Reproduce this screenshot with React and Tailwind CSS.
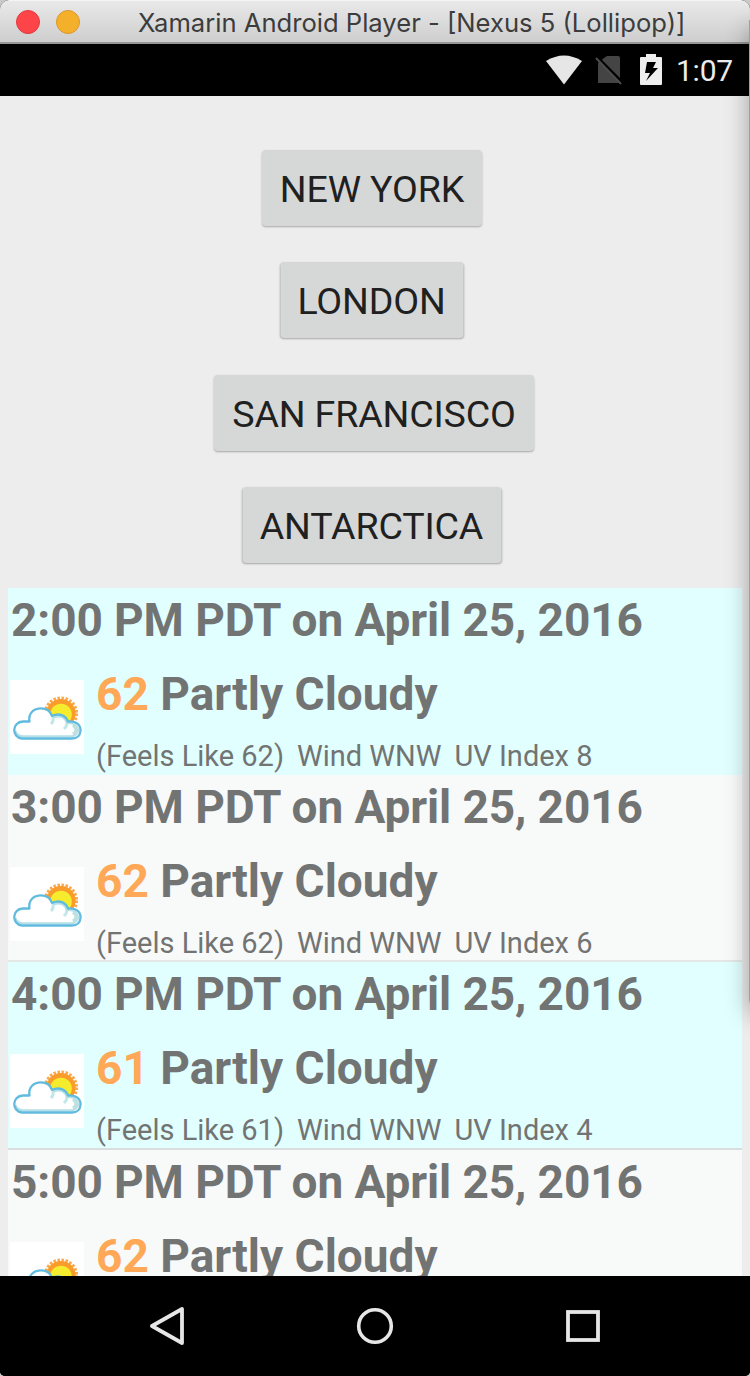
const cities = [
  { name: "NEW YORK", box: "w-[220px] -translate-x-[3px]" },
  { name: "LONDON", box: "w-[183px] -translate-x-[3.5px]" },
  { name: "SAN FRANCISCO", box: "w-[320px] -translate-x-[1px]" },
  { name: "ANTARCTICA", box: "w-[259px] -translate-x-[3.5px]" },
];

const hours = [
  { time: "2:00 PM", temp: 62, uv: 8, row: "h-[187px] bg-[#e1ffff] border-transparent" },
  { time: "3:00 PM", temp: 62, uv: 6, row: "h-[187px] bg-[#f8faf9] border-[#e3e8e7]" },
  { time: "4:00 PM", temp: 61, uv: 4, row: "h-[188px] bg-[#e1ffff] border-[#dadddd]" },
  { time: "5:00 PM", temp: 62, uv: 3, row: "h-[188px] bg-[#f8faf9] border-transparent" },
];

function PartlyCloudy() {
  return (
    <svg viewBox="0 0 74 74" className="block h-[74px] w-[74px] bg-white">
      <circle cx="51" cy="33.5" r="15.3" fill="none" stroke="#f9a94e" strokeWidth="3.6" strokeDasharray="2.5 1.505" />
      <circle cx="51" cy="33.5" r="14.6" fill="#f99c2c" />
      <circle cx="51" cy="34.5" r="10.8" fill="#f5ec2d" />
      <path
        d="M12 58.5C1.5 57.5 1.5 42 13 41.5H19.5C18 33 24 28.3 31 28.3C37 28.3 40.5 31.5 42 36C49 32.5 56 35.5 58 41.5C66 40.5 71 45 70.5 51C70 56 67 58.5 62 58.5Z"
        fill="#fff"
      />
      <path d="M43 37C44 42 42 43 41 44M57 41C57 46 56 47 54 49" fill="none" stroke="#c4e6e8" strokeWidth="3" />
      <path d="M43.5 37.5C50 35 55 37 57 43C64 42 68 46 68 51C67 54 65 56.3 61 56.3H13C8 56 6 54 5.5 51" fill="none" stroke="#b4e0e6" strokeWidth="2.2" />
      <path d="M63 45C67 47 68 52 63 54.5" fill="none" stroke="#bce1e0" strokeWidth="4" />
      <path
        d="M12 58.5C1.5 57.5 1.5 42 13 41.5H19.5C18 33 24 28.3 31 28.3C37 28.3 40.5 31.5 42 36C49 32.5 56 35.5 58 41.5C66 40.5 71 45 70.5 51C70 56 67 58.5 62 58.5Z"
        fill="none"
        stroke="#61bbdf"
        strokeWidth="2.3"
        strokeLinejoin="round"
      />
    </svg>
  );
}

function HourRow({ time, temp, uv, row }) {
  return (
    <li className={`shrink-0 border-b-2 pl-[3px] text-[#727473] ${row}`}>
      <h2 className="h-[65px] whitespace-nowrap pt-[4px] text-[46px] leading-[56px] font-bold tracking-[-0.1px]">
        {time} PDT on April 25, 2016
      </h2>
      <div className="-ml-px flex">
        <div className="w-[86px] shrink-0 pt-[27px]">
          <PartlyCloudy />
        </div>
        <div>
          <p className="h-[85px] whitespace-pre pt-[13px] text-[46px] leading-[56px] font-bold">
            <span className="text-[#ffa857]">{temp}</span> Partly Cloudy
          </p>
          <p className="flex gap-[13px] whitespace-nowrap text-[29px] leading-[36px]">
            <span>(Feels Like {temp})</span>
            <span>Wind WNW</span>
            <span>UV Index {uv}</span>
          </p>
        </div>
      </div>
    </li>
  );
}

export default function App() {
  return (
    <div className="bg-[#c9c9c9] font-['Roboto',sans-serif]">
      <div className="relative flex h-[1376px] w-[750px] flex-col overflow-hidden rounded-t-[9px] rounded-b-[5px] bg-black">
        <header className="flex h-[44px] shrink-0 items-center border-t border-b-2 border-t-[#f5f5f5] border-b-[#969696] bg-linear-to-b from-[#e9e9e9] to-[#cecece] pl-4">
          <span className="h-6 w-6 rounded-full border border-[#e2383e] bg-[#fd4448]" />
          <span className="ml-4 h-6 w-6 rounded-full border border-[#dc9829] bg-[#f5b02b]" />
          <h1 className="ml-[58px] whitespace-nowrap pt-[2px] font-['Inter',sans-serif] text-[25.6px] leading-8 text-[#3c3c3c]">
            Xamarin Android Player - [Nexus 5 (Lollipop)]
          </h1>
        </header>

        <div className="flex h-[52px] shrink-0 items-center justify-end bg-black pr-[17px] text-[#ececec]">
          <svg viewBox="0 0 36 30" className="h-[30px] w-[36px]" fill="#e6e6e6">
            <path d="M0 6Q18-5 36 6L18 29.5Z" />
          </svg>
          <svg viewBox="0 0 28 30" className="ml-[13px] h-[30px] w-[28px]">
            <path d="M9 3L12 1H23Q25 1 25 3V28H3V8Z" fill="#444" />
            <path d="M3 3L28 28" stroke="#000" strokeWidth="3" />
            <path d="M1 3L26 29" stroke="#4c4c4c" strokeWidth="2" />
          </svg>
          <svg viewBox="0 0 22 32" className="ml-[17px] h-[32px] w-[22px]">
            <path d="M6 0H16V3H21Q22 3 22 4V30Q22 31 21 31H1Q0 31 0 30V4Q0 3 1 3H6Z" fill="#eee" />
            <path d="M7 8H16L13 14H18L6 27L10 19H5Z" fill="#000" />
          </svg>
          <span className="ml-[14px] pt-[2px] text-[30px] leading-9 tracking-[-0.2px]">1:07</span>
        </div>

        <main className="flex h-[1180px] shrink-0 flex-col overflow-hidden bg-[#ededed]">
          <div className="flex h-[491.5px] shrink-0 flex-col items-center gap-[36.5px] pt-[53.5px]">
            {cities.map((c) => (
              <button
                key={c.name}
                className={`h-[76px] shrink-0 whitespace-nowrap rounded-[4px] bg-[#d6d8d7] pt-[2px] text-[37.6px] leading-[44px] tracking-[-0.15px] text-[#1f2020] shadow-[0_1px_2px_rgba(0,0,0,0.3)] ${c.box}`}
              >
                {c.name}
              </button>
            ))}
          </div>
          <ul className="mx-2 flex h-[688.5px] shrink-0 flex-col overflow-hidden">
            {hours.map((h) => (
              <HourRow key={h.time} {...h} />
            ))}
          </ul>
        </main>

        <nav className="flex h-[100px] shrink-0 items-center bg-black pl-[150px]">
          <svg viewBox="0 0 34 40" className="h-[40px] w-[34px]" fill="none" stroke="#e6e6e6" strokeWidth="3.8" strokeLinejoin="round">
            <path d="M2 20L32 3V37Z" />
          </svg>
          <svg viewBox="0 0 38 38" className="ml-[172px] h-[38px] w-[38px]" fill="none" stroke="#e6e6e6" strokeWidth="3.6">
            <circle cx="19" cy="19" r="16.3" />
          </svg>
          <svg viewBox="0 0 34 34" className="ml-[172px] h-[34px] w-[34px]" fill="none" stroke="#e6e6e6" strokeWidth="3.8">
            <rect x="2" y="3" width="30" height="28" />
          </svg>
        </nav>

        <div className="absolute top-[20px] left-[749px] h-[987px] w-10 rounded-bl-[8px] bg-[#a0a0a0] shadow-[0_8px_24px_rgba(0,0,0,0.33)]" />
      </div>
    </div>
  );
}
